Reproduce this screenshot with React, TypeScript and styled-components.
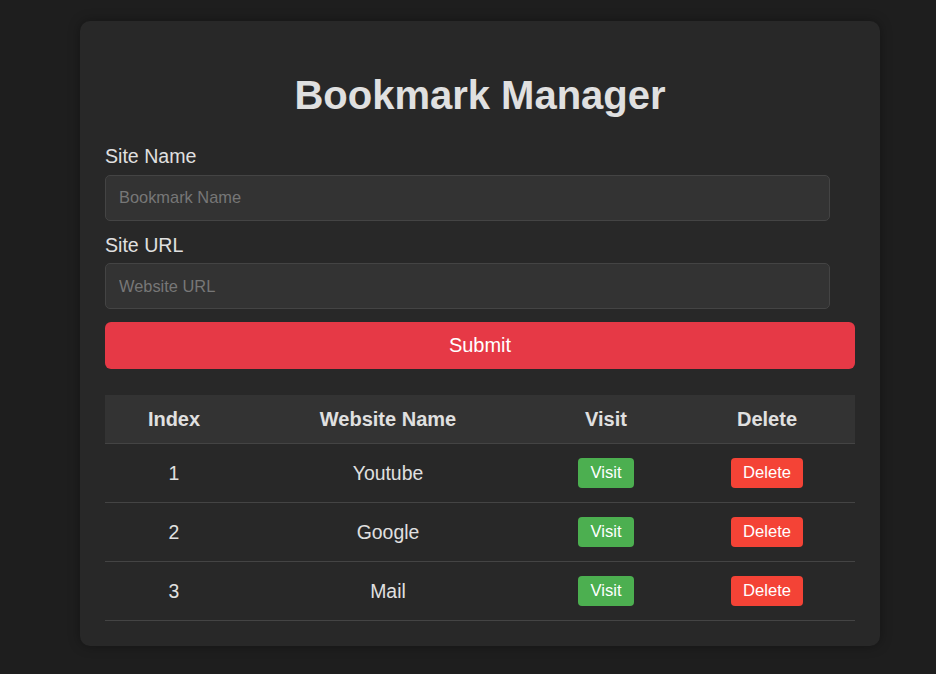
import React from 'react';
import styled, { createGlobalStyle } from 'styled-components';

const GlobalStyle = createGlobalStyle`
  body {
    margin: 0;
    background: #1e1e1e;
    font-family: 'Liberation Sans', Arial, sans-serif;
  }
`;

const Page = styled.div`
  box-sizing: border-box;
  min-height: 100vh;
  padding: 21px 0 0 80px;
`;

const Card = styled.div`
  box-sizing: border-box;
  width: 800px;
  background: #282828;
  border-radius: 10px;
  padding: 25px;
  box-shadow: 0 0 12px rgba(0, 0, 0, 0.35);
  display: flex;
  flex-direction: column;
`;

const Title = styled.h1`
  margin: 26px 0 27px;
  font-size: 40px;
  line-height: 46px;
  font-weight: 700;
  text-align: center;
  color: #e0e0e0;
`;

const Label = styled.label`
  display: block;
  font-size: 19.6px;
  line-height: 22.5px;
  color: #e0e0e0;
  margin-bottom: 7px;
`;

const Input = styled.input`
  box-sizing: border-box;
  width: 725px;
  height: 46px;
  padding: 0 13px;
  margin-bottom: 13px;
  background: #333;
  border: 1px solid #444;
  border-radius: 5px;
  color: #e0e0e0;
  font-family: inherit;
  font-size: 16.4px;
  outline: none;

  &::placeholder {
    color: #777;
  }
`;

const SubmitButton = styled.button`
  width: 100%;
  height: 47px;
  border: none;
  border-radius: 6px;
  background: #e63946;
  color: #fff;
  font-family: inherit;
  font-size: 20px;
  cursor: pointer;
`;

const Table = styled.table`
  width: 100%;
  margin-top: 26px;
  border-collapse: collapse;
  table-layout: fixed;
  color: #e0e0e0;
`;

const Th = styled.th<{ $w: number }>`
  width: ${(p) => p.$w}px;
  background: #333;
  padding: 12px 0;
  line-height: 24px;
  font-size: 20px;
  font-weight: 700;
  text-align: center;
  border-bottom: 1px solid #444;
`;

const Td = styled.td`
  padding: 14px 0;
  font-size: 19.4px;
  line-height: 30px;
  text-align: center;
  border-bottom: 1px solid #444;
`;

const RowButton = styled.button<{ $kind: 'visit' | 'delete' }>`
  display: inline-block;
  height: 30px;
  padding: 0 12.5px;
  border: none;
  border-radius: 4px;
  background: ${(p) => (p.$kind === 'visit' ? '#4caf50' : '#f44336')};
  color: #fff;
  font-family: inherit;
  font-size: 16.6px;
  line-height: 30px;
  vertical-align: top;
  cursor: pointer;
`;

const bookmarks = ['Youtube', 'Google', 'Mail'];

const App = (): JSX.Element => (
  <Page>
    <GlobalStyle />
    <Card>
      <Title>Bookmark Manager</Title>
      <Label>Site Name</Label>
      <Input placeholder="Bookmark Name" />
      <Label>Site URL</Label>
      <Input placeholder="Website URL" />
      <SubmitButton>Submit</SubmitButton>
      <Table>
        <thead>
          <tr>
            <Th $w={138}>Index</Th>
            <Th $w={290}>Website Name</Th>
            <Th $w={146}>Visit</Th>
            <Th $w={176}>Delete</Th>
          </tr>
        </thead>
        <tbody>
          {bookmarks.map((name, i) => (
            <tr key={name}>
              <Td>{i + 1}</Td>
              <Td>{name}</Td>
              <Td>
                <RowButton $kind="visit">Visit</RowButton>
              </Td>
              <Td>
                <RowButton $kind="delete">Delete</RowButton>
              </Td>
            </tr>
          ))}
        </tbody>
      </Table>
    </Card>
  </Page>
);

export default App;
